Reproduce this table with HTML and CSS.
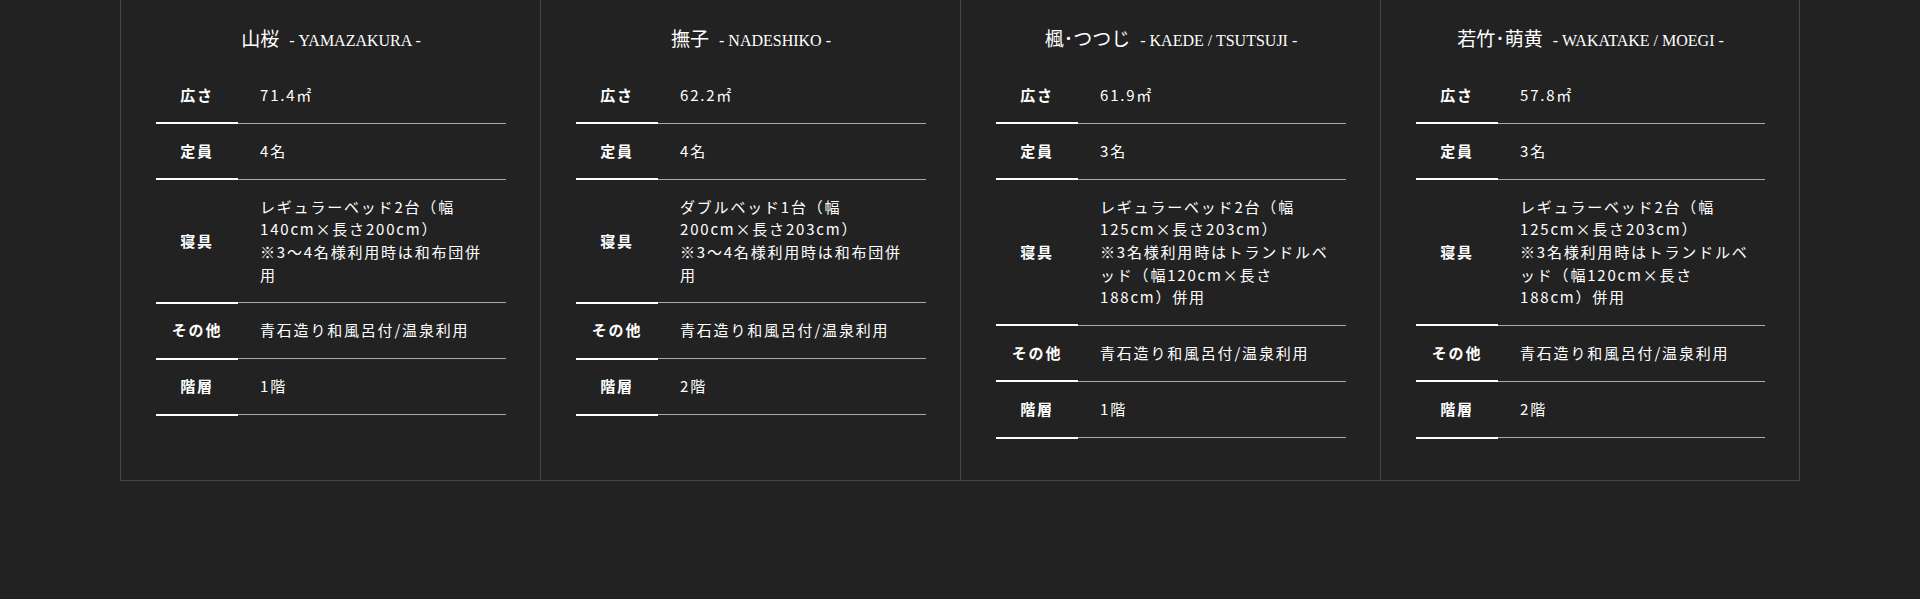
FILE: index.html
```html
<!DOCTYPE html>
<html lang="ja">

<head>
    <meta charset="UTF-8">
    <meta name="viewport" content="width=device-width, initial-scale=1.0">
    <title>客室のご案内</title>
    <link rel="stylesheet" href="styles.css">
</head>

<body>

    <div class="room-list">

        <div class="room">
            <h3 class="room-name">山桜<span class="room-en">- YAMAZAKURA -</span></h3>
            <table class="room-spec">
                <tr>
                    <th>広さ</th>
                    <td>71.4㎡</td>
                </tr>
                <tr>
                    <th>定員</th>
                    <td>4名</td>
                </tr>
                <tr>
                    <th>寝具</th>
                    <td>レギュラーベッド2台（幅140cm×長さ200cm）<br>※3～4名様利用時は和布団併用</td>
                </tr>
                <tr>
                    <th>その他</th>
                    <td>青石造り和風呂付/温泉利用</td>
                </tr>
                <tr>
                    <th>階層</th>
                    <td>1階</td>
                </tr>
            </table>
        </div>

        <div class="room">
            <h3 class="room-name">撫子<span class="room-en">- NADESHIKO -</span></h3>
            <table class="room-spec">
                <tr>
                    <th>広さ</th>
                    <td>62.2㎡</td>
                </tr>
                <tr>
                    <th>定員</th>
                    <td>4名</td>
                </tr>
                <tr>
                    <th>寝具</th>
                    <td>ダブルベッド1台（幅200cm×長さ203cm）<br>※3～4名様利用時は和布団併用</td>
                </tr>
                <tr>
                    <th>その他</th>
                    <td>青石造り和風呂付/温泉利用</td>
                </tr>
                <tr>
                    <th>階層</th>
                    <td>2階</td>
                </tr>
            </table>
        </div>

        <div class="room">
            <h3 class="room-name">楓･つつじ<span class="room-en">- KAEDE / TSUTSUJI -</span></h3>
            <table class="room-spec">
                <tr>
                    <th>広さ</th>
                    <td>61.9㎡</td>
                </tr>
                <tr>
                    <th>定員</th>
                    <td>3名</td>
                </tr>
                <tr>
                    <th>寝具</th>
                    <td>レギュラーベッド2台（幅125cm×長さ203cm）<br>※3名様利用時はトランドルベッド（幅120cm×長さ188cm）併用</td>
                </tr>
                <tr>
                    <th>その他</th>
                    <td>青石造り和風呂付/温泉利用</td>
                </tr>
                <tr>
                    <th>階層</th>
                    <td>1階</td>
                </tr>
            </table>
        </div>

        <div class="room">
            <h3 class="room-name">若竹･萌黄<span class="room-en">- WAKATAKE / MOEGI -</span></h3>
            <table class="room-spec">
                <tr>
                    <th>広さ</th>
                    <td>57.8㎡</td>
                </tr>
                <tr>
                    <th>定員</th>
                    <td>3名</td>
                </tr>
                <tr>
                    <th>寝具</th>
                    <td>レギュラーベッド2台（幅125cm×長さ203cm）<br>※3名様利用時はトランドルベッド（幅120cm×長さ188cm）併用</td>
                </tr>
                <tr>
                    <th>その他</th>
                    <td>青石造り和風呂付/温泉利用</td>
                </tr>
                <tr>
                    <th>階層</th>
                    <td>2階</td>
                </tr>
            </table>
        </div>

    </div>

</body>

</html>
```

FILE: styles.css
```css
* {
    box-sizing: border-box;
    margin: 0;
    padding: 0;
}

body {
    background-color: #222;
    color: #fff;
    font-family: "Noto Sans CJK JP", sans-serif;
}

.room-list {
    width: 1680px;
    margin: 0 auto;
    display: grid;
    grid-template-columns: repeat(4, 1fr);
    border-bottom: 1px solid #474747;
}

.room {
    border-left: 1px solid #474747;
    padding: 25px 34px 41px 35px;
}

.room:last-child {
    border-right: 1px solid #474747;
}

.room-name {
    height: 30px;
    line-height: 30px;
    margin-bottom: 13px;
    text-align: center;
    font-size: 19px;
    font-weight: normal;
    font-family: "Liberation Serif", "Noto Sans CJK JP", serif;
}

.room-en {
    margin-left: 10px;
    font-size: 16px;
    font-family: "Liberation Serif", serif;
}

.room-spec {
    width: 100%;
    border-collapse: collapse;
    font-size: 15px;
    line-height: 22.67px;
    letter-spacing: 1.8px;
}

.room-spec th {
    width: 82px;
    padding: 15.75px 0;
    text-align: center;
    vertical-align: middle;
    font-weight: bold;
    border-bottom: 2px solid #fff;
}

.room-spec td {
    padding: 15.75px 15px 15.75px 22px;
    text-align: left;
    border-bottom: 1px solid #aaa;
}
```
